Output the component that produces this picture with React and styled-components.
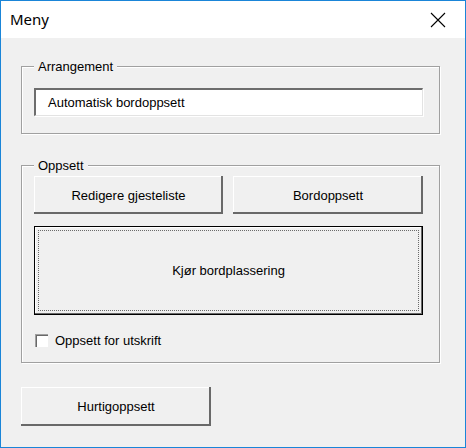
import React, { useState } from "react";
import styled, { createGlobalStyle } from "styled-components";

const GlobalStyle = createGlobalStyle`
  html, body {
    margin: 0;
    padding: 0;
    background: #ffffff;
  }
  * {
    box-sizing: border-box;
  }
`;

const App = () => {
  const [forPrint, setForPrint] = useState(false);

  return (
    <>
      <GlobalStyle />
      <Window>
        <TitleBar>
          <Title>Meny</Title>
          <CloseButton aria-label="Lukk">
            <svg width="16" height="16" viewBox="0 0 16 16">
              <path d="M1 1 L15 15 M15 1 L1 15" stroke="#000" strokeWidth="1.1" fill="none" />
            </svg>
          </CloseButton>
        </TitleBar>

        <Body>
          <Frame $top={28} $padTop={21} $padBottom={17}>
            <FrameLabel>Arrangement</FrameLabel>
            <TextBox>Automatisk bordoppsett</TextBox>
          </Frame>

          <Frame $top={31} $padTop={10} $padBottom={15}>
            <FrameLabel>Oppsett</FrameLabel>
            <ButtonRow>
              <Button $w={189} $h={38}>Redigere gjesteliste</Button>
              <Button $w={190} $h={38}>Bordoppsett</Button>
            </ButtonRow>
            <DefaultButton>Kjør bordplassering</DefaultButton>
            <CheckRow onClick={() => setForPrint(!forPrint)}>
              <CheckBox>{forPrint ? "✓" : ""}</CheckBox>
              <span>Oppsett for utskrift</span>
            </CheckRow>
          </Frame>

          <QuickButton $w={190} $h={39}>Hurtigoppsett</QuickButton>
        </Body>
      </Window>
    </>
  );
};

const Window = styled.div`
  width: 466px;
  height: 448px;
  border: 1px solid #1a85d8;
  background: #f0f0f0;
  display: flex;
  flex-direction: column;
  font-family: "Liberation Sans", Arial, sans-serif;
  font-size: 13px;
  color: #000;
`;

const TitleBar = styled.div`
  height: 37px;
  flex: none;
  background: #ffffff;
  display: flex;
  align-items: center;
  justify-content: space-between;
  padding: 0 19px 0 9px;
`;

const Title = styled.div`
  font-family: "Noto Sans", "Open Sans", sans-serif;
  font-size: 15px;
  color: #000;
  margin-top: -1px;
`;

const CloseButton = styled.div`
  width: 16px;
  height: 16px;
  display: flex;
  margin-top: 1px;
`;

const Body = styled.div`
  flex: 1;
  display: flex;
  flex-direction: column;
  align-items: flex-start;
  padding: 0 0 0 20px;
`;

const Frame = styled.div`
  position: relative;
  width: 419px;
  margin-top: ${({ $top }) => $top}px;
  padding: ${({ $padTop }) => $padTop}px 16px ${({ $padBottom }) => $padBottom}px 12px;
  border: 1px solid #a0a0a0;
  box-shadow: 1px 1px 0 #ffffff, inset 1px 1px 0 #ffffff;
  display: flex;
  flex-direction: column;
`;

const FrameLabel = styled.span`
  position: absolute;
  top: -8px;
  left: 12px;
  padding: 0 4px;
  background: #f0f0f0;
  line-height: 15px;
`;

const TextBox = styled.div`
  width: 389px;
  height: 28px;
  background: #ffffff;
  border-top: 2px solid #6d6d6d;
  border-left: 2px solid #6d6d6d;
  border-right: 1px solid #e3e3e3;
  border-bottom: 1px solid #e3e3e3;
  box-shadow: 1px 1px 0 #ffffff;
  padding-left: 12px;
  display: flex;
  align-items: center;
`;

const ButtonRow = styled.div`
  display: flex;
  gap: 10px;
`;

const Button = styled.button`
  width: ${({ $w }) => $w}px;
  height: ${({ $h }) => $h}px;
  flex: none;
  background: #f0f0f0;
  border: none;
  padding: 0;
  margin: 0;
  font: inherit;
  color: #000;
  box-shadow: inset -2px -2px 0 #696969, inset 1px 1px 0 #ffffff;
  display: flex;
  align-items: center;
  justify-content: center;
`;

const DefaultButton = styled(Button)`
  position: relative;
  width: 389px;
  height: 89px;
  margin-top: 12px;
  border: 1px solid #000;
  box-shadow: inset -1px -1px 0 #696969, inset 1px 1px 0 #ffffff;

  &::after {
    content: "";
    position: absolute;
    inset: 3px;
    border: 1px dotted #6a6a6a;
  }
`;

const QuickButton = styled(Button)`
  margin-top: 24px;
`;

const CheckRow = styled.label`
  display: flex;
  align-items: center;
  gap: 7px;
  margin-top: 18px;
  padding-left: 1px;
  height: 14px;
  cursor: default;
`;

const CheckBox = styled.span`
  width: 13px;
  height: 13px;
  background: #ffffff;
  box-shadow: inset 1px 1px 0 #a0a0a0, inset 2px 2px 0 #696969;
  display: flex;
  align-items: center;
  justify-content: center;
  font-size: 10px;
`;

export default App;
